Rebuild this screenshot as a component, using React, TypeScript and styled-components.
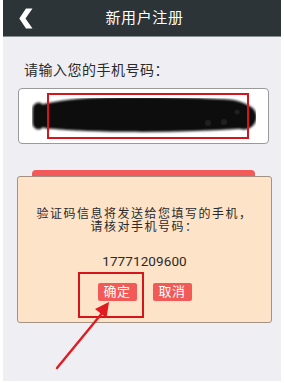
import React from "react";
import styled, { createGlobalStyle } from "styled-components";

const Global = createGlobalStyle`
  html, body { margin: 0; padding: 0; background: #ffffff; }
  body { font-family: Roboto, "Noto Sans CJK SC", sans-serif; }
  * { box-sizing: border-box; }
`;

const Frame = styled.div`
  width: 284px;
  height: 383px;
  padding: 0 3px 2px 3px;
  background: #ffffff;
`;

const Screen = styled.div`
  position: relative;
  width: 278px;
  height: 381px;
  background: #efeef3;
  display: flex;
  flex-direction: column;
  overflow: hidden;
`;

const Header = styled.header`
  height: 37px;
  flex: none;
  background: #2c3437;
  border-bottom: 1px solid #858c8f;
  display: grid;
  grid-template-columns: 1fr auto 1fr;
  align-items: center;
`;

const Back = styled.div`
  padding-left: 16px;
  display: flex;
  align-items: center;
`;

const Title = styled.h1`
  margin: 0;
  padding-left: 5px;
  color: #ffffff;
  font-size: 15px;
  font-weight: 400;
  letter-spacing: 0.6px;
  line-height: 20px;
`;

const Content = styled.main`
  padding: 23px 12px 0 15px;
  display: flex;
  flex-direction: column;
`;

const Label = styled.div`
  padding-left: 6px;
  color: #2a2a2a;
  font-size: 14px;
  letter-spacing: 0.5px;
  line-height: 20px;
`;

const InputBox = styled.div`
  position: relative;
  margin-top: 8px;
  height: 56px;
  background: #ffffff;
  border: 1px solid #9a9a9a;
  border-radius: 4px;
  display: flex;
  align-items: center;
  padding-left: 13px;
`;

const MarkBox = styled.div<{ $l: number; $t: number; $w: number; $h: number }>`
  position: absolute;
  left: ${(p) => p.$l}px;
  top: ${(p) => p.$t}px;
  width: ${(p) => p.$w}px;
  height: ${(p) => p.$h}px;
  border: 2px solid #d5151c;
  pointer-events: none;
`;

const SubmitBar = styled.div`
  margin: 26px 14px 0 14px;
  height: 40px;
  background: #f25959;
  border-radius: 4px;
`;

const Dialog = styled.div`
  position: absolute;
  left: 14px;
  top: 176px;
  width: 255px;
  height: 147px;
  background: #fde3c8;
  border: 1px solid #a39283;
  border-radius: 3px;
  display: flex;
  flex-direction: column;
  align-items: center;
  padding-top: 31px;
`;

const Message = styled.p`
  margin: 0;
  text-align: center;
  color: #2a2a2a;
  font-size: 12px;
  letter-spacing: 1.5px;
  line-height: 12.5px;
`;

const Phone = styled.div`
  margin-top: 20px;
  color: #2a2a2a;
  font-size: 13.5px;
  line-height: 16px;
  letter-spacing: 0.1px;
`;

const Buttons = styled.div`
  margin-top: 14px;
  display: flex;
  gap: 16px;
`;

const Btn = styled.button`
  width: 39px;
  height: 18px;
  padding: 0;
  border: none;
  border-radius: 2px;
  background: #f25a58;
  color: #ffffff;
  font-family: Roboto, "Noto Sans CJK SC", sans-serif;
  font-size: 13px;
  letter-spacing: 0.5px;
  line-height: 18px;
`;

const Overlay = styled.svg`
  position: absolute;
  left: 0;
  top: 0;
  pointer-events: none;
`;

export default function App() {
  return (
    <>
      <Global />
      <Frame>
        <Screen>
          <Header>
            <Back>
              <svg width="14" height="21" viewBox="0 0 14 21">
                <polygon points="7,0.5 13.5,0.5 6.5,10.5 13.5,20.5 7,20.5 0.3,10.5" fill="#ffffff" />
              </svg>
            </Back>
            <Title>新用户注册</Title>
            <div />
          </Header>
          <Content>
            <Label>请输入您的手机号码：</Label>
            <InputBox>
              <svg width="224" height="36" viewBox="0 0 224 36">
                <defs>
                  <filter id="soft" x="-5%" y="-20%" width="110%" height="140%">
                    <feGaussianBlur stdDeviation="1.2" />
                  </filter>
                </defs>
                <g filter="url(#soft)" fill="#0d0d0d" stroke="#0d0d0d" strokeLinecap="round">
                  <rect x="1" y="5" width="11" height="26" rx="5.5" />
                  <path d="M16 18 C 40 12, 90 10, 150 12 S 200 14, 212 19" strokeWidth="25" fill="none" />
                  <path d="M18 22 C 60 26, 140 27, 212 22" strokeWidth="17" fill="none" />
                  <circle cx="210" cy="18" r="8" />
                </g>
                <g fill="#2e2e2e" opacity="0.6">
                  <circle cx="192" cy="24" r="3" />
                  <circle cx="176" cy="25" r="3" />
                  <circle cx="205" cy="14" r="2.5" />
                </g>
              </svg>
              <MarkBox $l={28} $t={4} $w={202} $h={46} />
            </InputBox>
            <SubmitBar />
          </Content>
          <Dialog>
            <Message>
              验证码信息将发送给您填写的手机，
              <br />
              请核对手机号码：
            </Message>
            <Phone>17771209600</Phone>
            <Buttons>
              <Btn>确定</Btn>
              <Btn>取消</Btn>
            </Buttons>
            <MarkBox $l={60} $t={95} $w={66} $h={46} />
          </Dialog>
          <Overlay width="278" height="381" viewBox="0 0 278 381">
            <line x1="54" y1="368" x2="100" y2="312" stroke="#e11b22" strokeWidth="2.4" strokeLinecap="round" />
            <polygon points="106,302 103.5,318 92,309" fill="#e11b22" />
          </Overlay>
        </Screen>
      </Frame>
    </>
  );
}
